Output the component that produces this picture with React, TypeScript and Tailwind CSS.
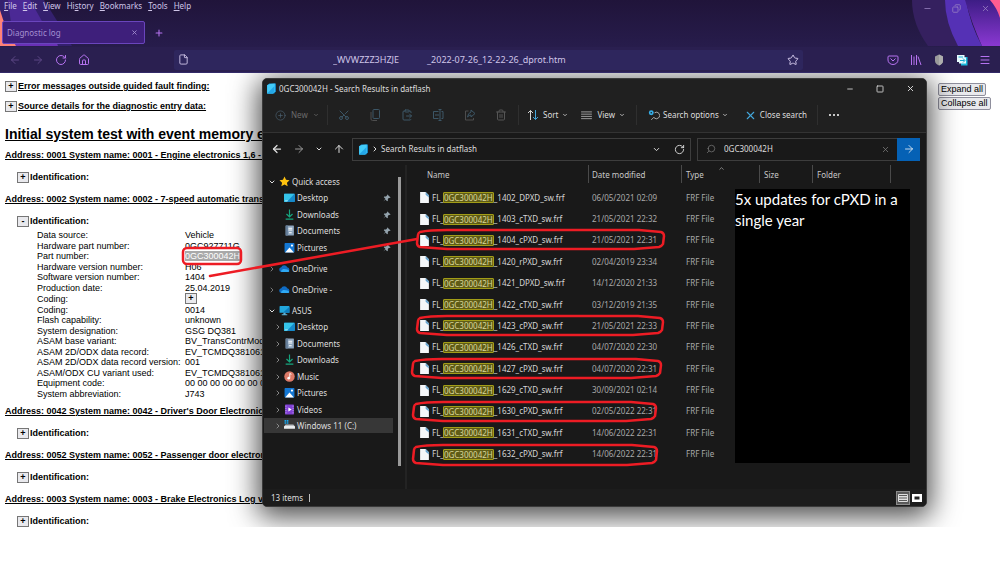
import React from 'react'
import {
  ArrowLeft,
  ArrowRight,
  ArrowUp,
  ChevronDown,
  ChevronRight,
  ChevronUp,
  CirclePlus,
  ClipboardPaste,
  Copy,
  File,
  Home,
  Menu,
  Minus,
  Plus,
  RotateCw,
  Scissors,
  Search,
  Square,
  Star,
  Trash2,
  X,
} from 'lucide-react'

const menus = ['File', 'Edit', 'View', 'History', 'Bookmarks', 'Tools', 'Help']

const details = [
  ['Data source:', 'Vehicle'],
  ['Hardware part number:', '0GC927711G'],
  ['Part number:', '0GC300042H'],
  ['Hardware version number:', 'H06'],
  ['Software version number:', '1404'],
  ['Production date:', '25.04.2019'],
  ['Coding:', '+'],
  ['Coding:', '0014'],
  ['Flash capability:', 'unknown'],
  ['System designation:', 'GSG DQ381'],
  ['ASAM base variant:', 'BV_TransContrModu'],
  ['ASAM 2D/ODX data record:', 'EV_TCMDQ381061'],
  ['ASAM 2D/ODX data record version:', '001'],
  ['ASAM/ODX CU variant used:', 'EV_TCMDQ381061_'],
  ['Equipment code:', '00 00 00 00 00 00 00'],
  ['System abbreviation:', 'J743'],
]

const files = [
  ['_1402_DPXD_sw.frf', '06/05/2021 02:09'],
  ['_1403_cTXD_sw.frf', '21/05/2021 22:32'],
  ['_1404_cPXD_sw.frf', '21/05/2021 22:31'],
  ['_1420_rPXD_sw.frf', '02/04/2019 23:34'],
  ['_1421_DPXD_sw.frf', '14/12/2020 21:33'],
  ['_1422_cTXD_sw.frf', '03/12/2019 21:35'],
  ['_1423_cPXD_sw.frf', '21/05/2021 22:33'],
  ['_1426_cTXD_sw.frf', '04/07/2020 22:30'],
  ['_1427_cPXD_sw.frf', '04/07/2020 22:31'],
  ['_1629_cTXD_sw.frf', '30/09/2021 02:14'],
  ['_1630_cPXD_sw.frf', '02/05/2022 22:31'],
  ['_1631_cTXD_sw.frf', '14/06/2022 22:31'],
  ['_1632_cPXD_sw.frf', '14/06/2022 22:31'],
]

type IconName =
  | 'star'
  | 'desktop'
  | 'downloads'
  | 'documents'
  | 'pictures'
  | 'cloud'
  | 'pc'
  | 'music'
  | 'videos'
  | 'drive'

const PlaceIcon = ({ name }: { name: IconName }) => (
  <svg viewBox="0 0 20 20" className="size-[11px] shrink-0">
    {name === 'star' && (
      <path d="M10 1l2.8 6 6.4.7-4.8 4.4 1.4 6.5L10 15.3l-5.8 3.3 1.4-6.5L.8 7.7 7.200 7z" fill="#ffc20e" />
    )}
    {name === 'desktop' && (
      <>
        <rect x="0" y="3" width="20" height="15" rx="1" fill="#1689c9" />
        <path d="M0 4a1 1 0 011-1h18L5 18H1a1 1 0 01-1-1z" fill="#35c3e8" />
        <path d="M2 16h5" stroke="#fff" />
      </>
    )}
    {name === 'downloads' && (
      <path d="M10 1v13M4.500 9l5.500 5.500L15.500 9M3 18.500h14" fill="none" stroke="#16a67f" strokeWidth="2.200" />
    )}
    {name === 'documents' && (
      <>
        <rect x="3" y="1" width="15" height="18" rx="1" fill="#8ea6bf" />
        <path d="M3 1h4v18H3z" fill="#647d98" />
        <path d="M8 6h7M8 9h7M9 14h5" stroke="#fff" strokeWidth="2" />
      </>
    )}
    {name === 'pictures' && (
      <>
        <rect x="1" y="2" width="18" height="17" rx="1.500" fill="#1477d3" />
        <path d="M2 19l8-9 8 9z" fill="#fff" />
        <circle cx="14.500" cy="6.500" r="2" fill="#fff" />
      </>
    )}
    {name === 'cloud' && (
      <>
        <path d="M4.500 16.500a4.500 4.500 0 01-.5-8.900A6 6 0 0115 7.500a4.600 4.600 0 01.5 9z" fill="#0f6cc4" />
        <path d="M4.500 16.500c-2-1 1-6 5-5.500s8 1 9 3-1.500 2.500-3 2.500z" fill="#2fa9f2" />
      </>
    )}
    {name === 'pc' && (
      <>
        <rect x="1" y="2" width="18" height="12" rx="1" fill="#22a7dc" />
        <path d="M19 3v11H7z" fill="#0f7dbd" />
        <path d="M8 14h4v3h3v1.500H5V17h3z" fill="#5db4d8" />
      </>
    )}
    {name === 'music' && (
      <>
        <circle cx="10" cy="10" r="9.500" fill="#dd7a68" />
        <path d="M1 7a9.500 9.500 0 0015.500 10A9.500 9.500 0 011 7z" fill="#b8639c" />
        <circle cx="8.500" cy="13" r="2.400" fill="#fff" />
        <path d="M10.500 13V4.500l3 1.500" fill="none" stroke="#fff" strokeWidth="1.600" />
      </>
    )}
    {name === 'videos' && (
      <>
        <rect x="2" y="1" width="16" height="18" rx="1" fill="#8141d4" />
        <path d="M3.500 3v14M16.500 3v14" stroke="#d3b2ff" strokeWidth="1.500" strokeDasharray="2 2" />
        <path d="M8 6.500l6 3.500-6 3.500z" fill="#fff" />
      </>
    )}
    {name === 'drive' && (
      <>
        <path d="M1 0h3v3H1zM5 0h3v3H5zM1 4h3v3H1zM5 4h3v3H5z" fill="#18a6ec" />
        <path d="M3 8h14l3 4H0z" fill="#b9bdc1" />
        <rect y="11" width="20" height="5" rx="1" fill="#e9ecee" />
      </>
    )}
  </svg>
)

const BlueFolder = () => (
  <svg viewBox="0 0 20 20" className="size-[11px] shrink-0">
    <path d="M2 4l4-3h12v14l-3 4H2z" fill="#168fd4" />
    <path d="M2 4l5-2 9-1v14l-3 4H2z" fill="#43ccf8" />
    <path d="M2 19L15 6v9l-2 4z" fill="#24a7e8" />
  </svg>
)

const Pin = () => (
  <svg viewBox="0 0 20 20" className="ml-auto size-2 shrink-0">
    <path d="M11 1l8 8-2 1-2-.5-3 3 .2 4.500-2 1-4-4L1 19l5-7-4-4 1-2 4.500.2 3-3L10 2z" fill="#94a3ad" />
  </svg>
)

type PlaceProps = { icon: IconName; label: string; open?: boolean; pinned?: boolean; active?: boolean }

const Group = ({ icon, label, open }: PlaceProps) => (
  <button className="flex h-[17px] w-full items-center gap-[2px] pl-1">
    {open ? (
      <ChevronDown className="size-2 shrink-0" strokeWidth={3} />
    ) : (
      <ChevronRight className="size-2 shrink-0 text-[#8a8a8a]" strokeWidth={2.5} />
    )}
    <span className="pl-px">
      <PlaceIcon name={icon} />
    </span>
    {label}
  </button>
)

const Place = ({ icon, label, pinned, active }: PlaceProps) => (
  <li className="h-[17px] even:h-4">
    <button className={`flex h-[15px] w-full items-center gap-[2px] pl-[10px] pr-[2px] ${active ? 'bg-[#373737]' : ''}`}>
      {pinned ? (
        <span className="w-2" />
      ) : (
        <ChevronRight className="size-2 shrink-0 text-[#9a9a9a]" strokeWidth={2.5} />
      )}
      <PlaceIcon name={icon} />
      {label}
      {pinned && <Pin />}
    </button>
  </li>
)

const Toggle = ({ sign = '+' }: { sign?: string }) => (
  <button className="flex h-[11px] w-3 shrink-0 items-center justify-center border border-[#767676] bg-[#e9e9ed] text-[9px] leading-none font-bold text-black">
    {sign}
  </button>
)

const Address = ({ children }: { children: React.ReactNode }) => (
  <h2 className="h-3 leading-3 font-bold underline">{children}</h2>
)

const Identification = ({ sign }: { sign?: string }) => (
  <div className="flex h-3 items-center gap-px pl-3 font-bold">
    <Toggle sign={sign} />
    Identification:
  </div>
)

const BrowserHeader = () => (
  <header className="relative bg-linear-to-b from-[#20143a] to-[#2b2156] font-['Noto_Sans',sans-serif] text-[#cfc5e8]">
    <svg viewBox="0 0 80 46" className="absolute left-0 top-0 h-[46px] w-20">
      <path d="M0 0h44l20 32 8 14H0z" fill="#34206e" />
      <path d="M8 0h22l26 46H14z" fill="#4b2995" />
      <path d="M12 35h42l4 11H12z" fill="#6930b5" />
      <path d="M0 10q5 18 16 36H0z" fill="#ff8178" />
    </svg>
    <svg viewBox="0 0 100 46" className="absolute right-0 top-0 h-[46px] w-[100px]">
      <defs>
        <linearGradient id="ribbon" x1="0" y1="0" x2="0" y2="1">
          <stop offset="0" stopColor="#3d1d85" />
          <stop offset="1" stopColor="#8a38d2" />
        </linearGradient>
      </defs>
      <path d="M12 0h35l12 46H28Q12 24 12 0z" fill="#35205f" />
      <path d="M45 0h21q4 24 16 46H58Q45 22 45 0z" fill="#5531b5" />
      <path d="M65 0h35v46H82Q72 24 65 0z" fill="url(#ribbon)" />
      <path d="M90 0h10v18Q97 8 90 0z" fill="#ff5c91" />
    </svg>
    <div className="relative flex h-[21px] items-start justify-between">
      <nav className="flex gap-[6px] pl-1 text-[8px] leading-3">
        {menus.map((menu) => (
          <button key={menu}>
            {menu === 'History' ? (
              <>
                Hi<u>s</u>tory
              </>
            ) : (
              <>
                <u>{menu[0]}</u>
                {menu.slice(1)}
              </>
            )}
          </button>
        ))}
      </nav>
      <div className="flex gap-5 pr-[10px] pt-1 text-[#9c86c4]">
        <button aria-label="Minimize"><Minus size={9} /></button>
        <button aria-label="Restore"><Copy size={9} className="-scale-x-100" /></button>
        <button aria-label="Close"><X size={9} /></button>
      </div>
    </div>
    <div className="relative flex items-center gap-[9px] pb-[3px] pl-[2px]">
      <div className="flex h-[23px] w-[143px] items-center justify-between rounded-[2px] border border-[#6a45bd] bg-[#3e1f7b] px-1 text-[8px] text-[#a48fd0]">
        Diagnostic log
        <button aria-label="Close tab" className="pr-[2px]"><X size={7} strokeWidth={3} /></button>
      </div>
      <button aria-label="New tab" className="text-[#b673f0]"><Plus size={10} strokeWidth={2.5} /></button>
    </div>
    <div className="relative flex h-[26px] items-center border-b border-[#332a68] bg-[#2a1f50] px-[9px]">
      <div className="flex w-[165px] gap-[11px] text-[#b673f0]">
        <button aria-label="Back" className="text-[#5c4785]"><ArrowLeft size={12} /></button>
        <button aria-label="Forward" className="text-[#5c4785]"><ArrowRight size={12} /></button>
        <button aria-label="Reload"><RotateCw size={12} /></button>
        <button aria-label="Home"><Home size={12} /></button>
      </div>
      <div className="flex h-5 flex-1 items-center rounded-[2px] bg-[#2e265d] px-1">
        <File size={11} />
        <input
          aria-label="Address"
          className="min-w-0 flex-1 bg-transparent pl-36 pt-px text-[9px] outline-none"
          defaultValue={'_WVWZZZ3HZJE' + '\u00a0'.repeat(12) + '_2022-07-26_12-22-26_dprot.htm'}
        />
        <button aria-label="Bookmark"><Star size={12} /></button>
      </div>
      <div className="flex w-[188px] items-center justify-end gap-[11px] text-[#b673f0]">
        <button aria-label="Pocket">
          <svg viewBox="0 0 24 24" className="size-3" fill="none" stroke="currentColor" strokeWidth="2">
            <path d="M4 4h16a2 2 0 012 2v6a10 9 0 01-20 0V6a2 2 0 012-2z" />
            <path d="M7 9l5 5 5-5" />
          </svg>
        </button>
        <button aria-label="Library">
          <svg viewBox="0 0 24 24" className="size-3" fill="none" stroke="currentColor" strokeWidth="2">
            <path d="M3 2v20M8 5v17M13 2v20M16 5l6 17" />
          </svg>
        </button>
        <button aria-label="Shield">
          <svg viewBox="0 0 24 24" className="size-3">
            <path d="M12 1l8 4v9c0 4-4 7-8 9-4-2-8-5-8-9V5z" fill="#9a9a9a" />
            <path d="M12 1l8 4v9c0 4-4 7-8 9z" fill="#adadad" />
          </svg>
        </button>
        <button aria-label="Translate">
          <svg viewBox="0 0 24 24" className="size-3">
            <path d="M10 6h13v17H10z" fill="#19b8dc" />
            <path d="M2 2h15v5h3v12H6v-3H2z" fill="#e8fbff" />
            <path d="M5 6h9M8 13h9M14 9l4 4-4 4" fill="none" stroke="#16a9cf" strokeWidth="2" />
          </svg>
        </button>
        <button aria-label="Menu"><Menu size={12} /></button>
      </div>
    </div>
  </header>
)

const Report = () => (
  <div className="flex min-w-0 flex-1 flex-col overflow-hidden whitespace-nowrap pl-[5px] pt-[3px]">
    {['Error messages outside guided fault finding:', 'Source details for the diagnostic entry data:'].map((text) => (
      <div key={text} className="flex h-5 items-center gap-px font-bold">
        <Toggle />
        <span className="underline">{text}</span>
      </div>
    ))}
    <h1 className="pb-[5px] pt-2 text-[14px] leading-5 font-bold underline">Initial system test with event memory e</h1>
    <div className="flex flex-col gap-[10px]">
      <Address>Address: 0001 System name: 0001 - Engine electronics 1,6 - 2,0</Address>
      <Identification />
      <Address>Address: 0002 System name: 0002 - 7-speed automatic transm</Address>
      <Identification sign="-" />
    </div>
    <table className="mb-[6px] ml-8 mt-[3px] w-[226px] table-fixed border-collapse text-left">
      <tbody>
        {details.map(([label, value], i) => (
          <tr key={i} className="h-[10px] leading-[10px] even:h-[11px]">
            <th className="w-[148px] p-0 font-normal">{label}</th>
            <td className="p-0">
              {value === '+' ? (
                <Toggle />
              ) : value === '0GC300042H' ? (
                <mark className="bg-[#a9a9a9] text-white">{value}</mark>
              ) : (
                value
              )}
            </td>
          </tr>
        ))}
      </tbody>
    </table>
    <div className="flex flex-col gap-[10px]">
      <Address>Address: 0042 System name: 0042 - Driver's Door Electronics L</Address>
      <Identification />
      <Address>Address: 0052 System name: 0052 - Passenger door electronic</Address>
      <Identification />
      <Address>Address: 0003 System name: 0003 - Brake Electronics Log vari</Address>
      <Identification />
    </div>
  </div>
)

const Sidebar = () => (
  <aside className="flex w-[144px] shrink-0 justify-between border-r-2 border-[#232323] pt-2">
    <div className="flex w-[130px] flex-col gap-1 pl-px">
      <div>
        <Group icon="star" label="Quick access" open />
        <ul>
          <Place icon="desktop" label="Desktop" pinned />
          <Place icon="downloads" label="Downloads" pinned />
          <Place icon="documents" label="Documents" pinned />
          <Place icon="pictures" label="Pictures" pinned />
        </ul>
      </div>
      <Group icon="cloud" label="OneDrive" />
      <Group icon="cloud" label="OneDrive -" />
      <div>
        <Group icon="pc" label="ASUS" open />
        <ul>
          <Place icon="desktop" label="Desktop" />
          <Place icon="documents" label="Documents" />
          <Place icon="downloads" label="Downloads" />
          <Place icon="music" label="Music" />
          <Place icon="pictures" label="Pictures" />
          <Place icon="videos" label="Videos" />
          <Place icon="drive" label="Windows 11 (C:)" active />
        </ul>
      </div>
    </div>
    <div className="mb-[23px] mr-1 mt-1 w-[3px] bg-[#9a9a9a]" />
  </aside>
)

const FileList = () => (
  <div className="relative min-w-0 flex-1 pb-6">
    <table className="h-[300px] w-full table-fixed border-collapse text-left text-[#a9a9a9]">
      <thead>
        <tr className="h-[22px] align-top text-[#c8c8c8]">
          <th className="w-[182px] p-0 font-normal"><div className="h-[18px] border-r border-[#4a4a4a] pl-5 leading-5">Name</div></th>
          <th className="w-[93px] p-0 font-normal"><div className="h-[18px] border-r border-[#4a4a4a] pl-[3px] leading-5">Date modified</div></th>
          <th className="w-[78px] p-0 font-normal">
            <div className="relative h-[18px] border-r border-[#4a4a4a] pl-[4px] leading-5">
              Type
              <ChevronUp size={7} className="absolute left-9 top-0" />
            </div>
          </th>
          <th className="w-[53px] p-0 font-normal"><div className="h-[18px] border-r border-[#4a4a4a] pl-[4px] leading-5">Size</div></th>
          <th className="w-[78px] p-0 font-normal"><div className="h-[18px] border-r border-[#4a4a4a] pl-[4px] leading-5">Folder</div></th>
          <th className="p-0" />
        </tr>
      </thead>
      <tbody>
        {files.map(([name, date]) => (
          <tr key={name}>
            <td className="p-0 pl-[13px] text-[#d6d6d6]">
              <div className="flex items-center">
                <svg viewBox="0 0 16 20" className="mr-[3px] h-[11px] w-[9px] shrink-0">
                  <path d="M0 0h10l6 6v14H0z" fill="#f5f7f9" />
                  <path d="M10 0l6 6v4l-6-5z" fill="#6aa5cf" />
                </svg>
                FL_
                <mark className="-ml-px rounded-[1px] border border-[#a29d17] bg-[#5f5c16] leading-[9px] text-[#d9d69a]">0GC300042H</mark>
                {name}
              </div>
            </td>
            <td className="p-0 pl-[3px]">{date}</td>
            <td className="p-0 pl-[4px]">FRF File</td>
            <td />
            <td />
            <td />
          </tr>
        ))}
      </tbody>
    </table>
    <p className="absolute bottom-[26px] left-[328px] right-4 top-6 bg-black font-['Lato',sans-serif] text-[15px] leading-[21px] text-white">
      5x updates for cPXD in a single year
    </p>
  </div>
)

const Explorer = () => (
  <section className="absolute left-[262px] right-[73px] top-[5px] overflow-hidden rounded-[5px] border border-[#3a3a3a] bg-[#191919] font-['Noto_Sans',sans-serif] text-[8px] text-[#dedede] shadow-[0_6px_28px_4px_rgba(0,0,0,0.7)]">
    <div className="flex h-[19px] items-center gap-[2px] bg-[#202020] pl-[3px]">
      <BlueFolder />
      <h2>0GC300042H - Search Results in datflash</h2>
      <div className="ml-auto flex gap-[22px] pr-[11px]">
        <button aria-label="Minimize window"><Minus size={8} strokeWidth={2.5} /></button>
        <button aria-label="Maximize window"><Square size={8} strokeWidth={2.5} /></button>
        <button aria-label="Close window"><X size={9} strokeWidth={2.5} /></button>
      </div>
    </div>
    <div className="flex h-[35px] items-center border-b border-[#333333] bg-[#202020]">
      <button className="flex w-[53px] items-center gap-[5px] pl-3 text-[#6b6b6b]">
        <CirclePlus size={11} strokeWidth={1.5} className="shrink-0 text-[#4b6070]" />
        New
        <ChevronDown size={6} strokeWidth={3} className="shrink-0" />
      </button>
      <div className="ml-[11px] flex h-5 w-[192px] items-center justify-between border-x border-[#2f2f2f] pl-[10px] pr-[11px] text-[#3c5666]">
        <button aria-label="Cut"><Scissors size={12} className="-rotate-90" strokeWidth={2} /></button>
        <button aria-label="Copy">
          <svg viewBox="0 0 12 12" className="size-3" fill="none" stroke="currentColor">
            <rect x="4" y=".5" width="6.500" height="9" rx="1" />
            <path d="M2 3v7a1.500 1.500 0 001.500 1.500H8" stroke="#4d4d4d" />
          </svg>
        </button>
        <button aria-label="Paste"><ClipboardPaste size={12} strokeWidth={2} /></button>
        <button aria-label="Rename">
          <svg viewBox="0 0 12 12" className="size-3" fill="none" stroke="currentColor">
            <path d="M6.500 2.500h-5v7h5M9.500 2.500h1.500v7H9.500M3 6h4" />
            <path d="M8 .5v11M6.500.5h3M6.500 11.500h3" />
          </svg>
        </button>
        <button aria-label="Share">
          <svg viewBox="0 0 12 12" className="size-3" fill="none" stroke="currentColor">
            <path d="M4.500 2H1.500v9h8V9" stroke="#4d4d4d" />
            <path d="M7 1l4 3.500L7 8V6Q5 6 3.500 8 4 4 7 3z" />
          </svg>
        </button>
        <button aria-label="Delete" className="text-[#555555]"><Trash2 size={12} strokeWidth={2} /></button>
      </div>
      <button className="flex w-[57px] items-center gap-1 pl-2">
        <svg viewBox="0 0 12 12" className="size-3 shrink-0" fill="none">
          <path d="M3.500 11V1.500M1 4l2.500-2.500L6 4" stroke="#d5d5d5" />
          <path d="M8.500 1v9.500M6 8l2.500 2.500L11 8" stroke="#43a5da" />
        </svg>
        Sort
        <ChevronDown size={6} strokeWidth={3} className="shrink-0" />
      </button>
      <button className="flex h-5 w-[61px] items-center justify-end gap-1 border-r border-[#2f2f2f] pr-[11px]">
        <svg viewBox="0 0 12 10" className="mr-px h-[9px] w-[11px] shrink-0">
          <path d="M0 1h12M0 3.500h12M0 6h12M0 8.500h12" stroke="#a8a8a8" />
        </svg>
        View
        <ChevronDown size={6} strokeWidth={3} className="shrink-0" />
      </button>
      <button className="flex w-[100px] items-center gap-[3px] pl-[11px] whitespace-nowrap">
        <svg viewBox="0 0 22 20" className="h-[11px] w-3 shrink-0" fill="none">
          <path d="M12 5a6 6 0 11-1 9M11 13l-5 5" stroke="#b8b8b8" strokeWidth="1.600" />
          <circle cx="6" cy="5" r="4.500" fill="#35aee8" />
          <circle cx="6" cy="5" r="1.500" fill="#202020" />
        </svg>
        Search options
        <ChevronDown size={6} strokeWidth={3} className="shrink-0" />
      </button>
      <button className="flex h-5 w-[81px] items-center justify-end gap-[3px] border-r border-[#2f2f2f] pr-[10px] whitespace-nowrap">
        <X size={13} strokeWidth={2} className="shrink-0 text-[#43a5da]" />
        Close search
      </button>
      <button aria-label="More" className="flex gap-[2px] pl-[11px]">
        <span className="size-[2px] rounded-full bg-white" />
        <span className="size-[2px] rounded-full bg-white" />
        <span className="size-[2px] rounded-full bg-white" />
      </button>
    </div>
    <div className="flex h-8 items-center gap-[6px] pr-[6px]">
      <div className="flex w-[83px] items-center gap-[10px] pl-2">
        <button aria-label="Back folder"><ArrowLeft size={12} strokeWidth={2.5} /></button>
        <button aria-label="Forward folder" className="text-[#9a9a9a]"><ArrowRight size={12} /></button>
        <button aria-label="Recent folders"><ChevronDown size={8} strokeWidth={3} /></button>
        <button aria-label="Up"><ArrowUp size={12} strokeWidth={2} /></button>
      </div>
      <div className="flex h-[23px] flex-1 items-center gap-[2px] border border-[#3d3d3d] px-[5px]">
        <BlueFolder />
        <ChevronRight size={8} strokeWidth={3} />
        <button>Search Results in datflash</button>
        <button aria-label="Address history" className="ml-auto pr-[11px]"><ChevronDown size={9} strokeWidth={2.5} /></button>
        <button aria-label="Refresh"><RotateCw size={11} /></button>
      </div>
      <div className="flex h-[23px] w-[223px] items-center border border-[#3d3d3d] pl-2">
        <Search size={10} strokeWidth={1.5} className="-scale-x-100 text-[#8a8a8a]" />
        <input aria-label="Search" className="min-w-0 flex-1 bg-transparent pl-2 outline-none" defaultValue="0GC300042H" />
        <button aria-label="Clear search" className="pr-[7px] text-[#7d7d7d]"><X size={9} strokeWidth={2} /></button>
        <button aria-label="Go" className="-my-px -mr-px flex h-[23px] w-[23px] items-center justify-center bg-[#0561b5] text-white">
          <ArrowRight size={12} strokeWidth={1.5} />
        </button>
      </div>
    </div>
    <div className="flex">
      <Sidebar />
      <FileList />
    </div>
    <footer className="flex h-[17px] items-center gap-[6px] bg-[#1c1c1c] pl-2">
      13 items
      <span className="h-2 w-px bg-[#bdbdbd]" />
      <div className="ml-auto flex pr-[2px] text-[#e0e0e0]">
        <button aria-label="Details view" className="flex size-[14px] items-center justify-center border border-[#8b8b8b] bg-[#5a5a5a]">
          <svg viewBox="0 0 10 10" className="size-[10px]">
            <path d="M.5 1.500h9v7h-9zM1 3.500h8M1 5h8M1 6.500h8" fill="none" stroke="currentColor" />
          </svg>
        </button>
        <button aria-label="Thumbnail view" className="flex size-[14px] items-center justify-center">
          <svg viewBox="0 0 10 10" className="size-[10px]">
            <path d="M0 1h10v8H0z" fill="#fff" />
            <path d="M2.500 3.500h5v3h-5z" fill="#222" />
          </svg>
        </button>
      </div>
    </footer>
  </section>
)

// hand drawn outline around one row: left, top, right, bottom
const rings = [
  [417, 157, 664, 176],
  [417, 243, 663, 262],
  [412, 286, 661, 305],
  [413, 329, 656, 348],
  [413, 372, 657, 392],
]

const Annotations = () => (
  <svg
    className="pointer-events-none absolute left-0 top-0 h-full w-full"
    fill="none"
    stroke="#ed1c24"
    strokeWidth="2.500"
    strokeLinejoin="round"
    strokeLinecap="round"
  >
    <rect x="183" y="175" width="58" height="16" rx="4" />
    <path d="M210 203L417 166" />
    {rings.map(([l, t, r, b]) => (
      <path
        key={t}
        d={`M${l + 3} ${t + 2}Q${l + 12} ${t} ${l + 30} ${t}H${r - 25}L${r - 3} ${t + 2}Q${r} ${t + 3} ${r} ${t + 6}L${r - 1} ${b - 5}Q${r - 2} ${b - 3} ${r - 5} ${b - 2}L${r - 30} ${b}H${l + 30}L${l + 3} ${b - 2}Q${l} ${b - 3} ${l} ${b - 6}L${l + 1} ${t + 5}Q${l + 1} ${t + 3} ${l + 3} ${t + 2}`}
      />
    ))}
  </svg>
)

const App = () => (
  <div className="min-h-screen bg-white">
    <BrowserHeader />
    <main className="relative flex overflow-hidden bg-white font-['Liberation_Sans',sans-serif] text-[9px] leading-3 text-black">
      <Report />
      <div className="flex w-[62px] flex-col items-start gap-px pt-[10px]">
        <button className="h-[13px] rounded-[2px] border border-[#8f8f9d] bg-[#e9e9ed] px-[2px] leading-[11px]">Expand all</button>
        <button className="h-[13px] rounded-[2px] border border-[#8f8f9d] bg-[#e9e9ed] px-[2px] leading-[11px]">Collapse all</button>
      </div>
      <Explorer />
      <Annotations />
    </main>
  </div>
)

export default App
